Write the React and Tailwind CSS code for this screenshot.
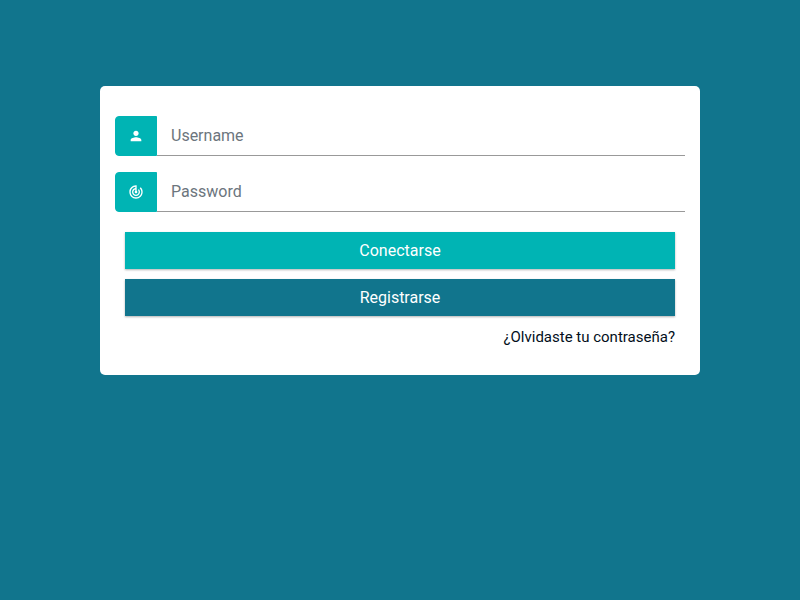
import React from "react";
import { MdPerson, MdTrackChanges } from "react-icons/md";

function Field({ id, label, type, icon: Icon }) {
  return (
    <div className="mb-4 flex h-10">
      <label
        htmlFor={id}
        aria-label={label}
        className="flex items-center rounded-l border border-[#00b4b4] bg-[#00b4b4] px-3 text-white"
      >
        <Icon className="size-4" aria-hidden="true" />
      </label>
      <input
        id={id}
        type={type}
        placeholder={label}
        className="min-w-0 flex-1 border-b border-[#999999] bg-white px-3.5 text-base text-[#495057] outline-none placeholder:text-[#6c757d]"
      />
    </div>
  );
}

export default function App() {
  return (
    <main className="min-h-screen bg-[#11758d] px-[12.5%] pt-[86px] font-['Roboto',sans-serif]">
      <form className="rounded-[5px] bg-white px-[15px] pt-[30px] pb-[27px]" onSubmit={(e) => e.preventDefault()}>
        <Field id="username" label="Username" type="text" icon={MdPerson} />
        <Field id="password" label="Password" type="password" icon={MdTrackChanges} />
        <div className="mt-5 flex flex-col gap-2.5 px-2.5">
          <button type="submit" className="h-[37px] bg-[#00b4b4] text-base text-white shadow-[0_1px_2px_rgba(0,0,0,0.3)]">
            Conectarse
          </button>
          <button type="button" className="h-[37px] bg-[#11758d] text-base text-white shadow-[0_1px_2px_rgba(0,0,0,0.3)]">
            Registrarse
          </button>
          <a href="#recuperar" className="self-end text-[15px] leading-[22px] text-[#030f1b]">
            ¿Olvidaste tu contraseña?
          </a>
        </div>
      </form>
    </main>
  );
}
